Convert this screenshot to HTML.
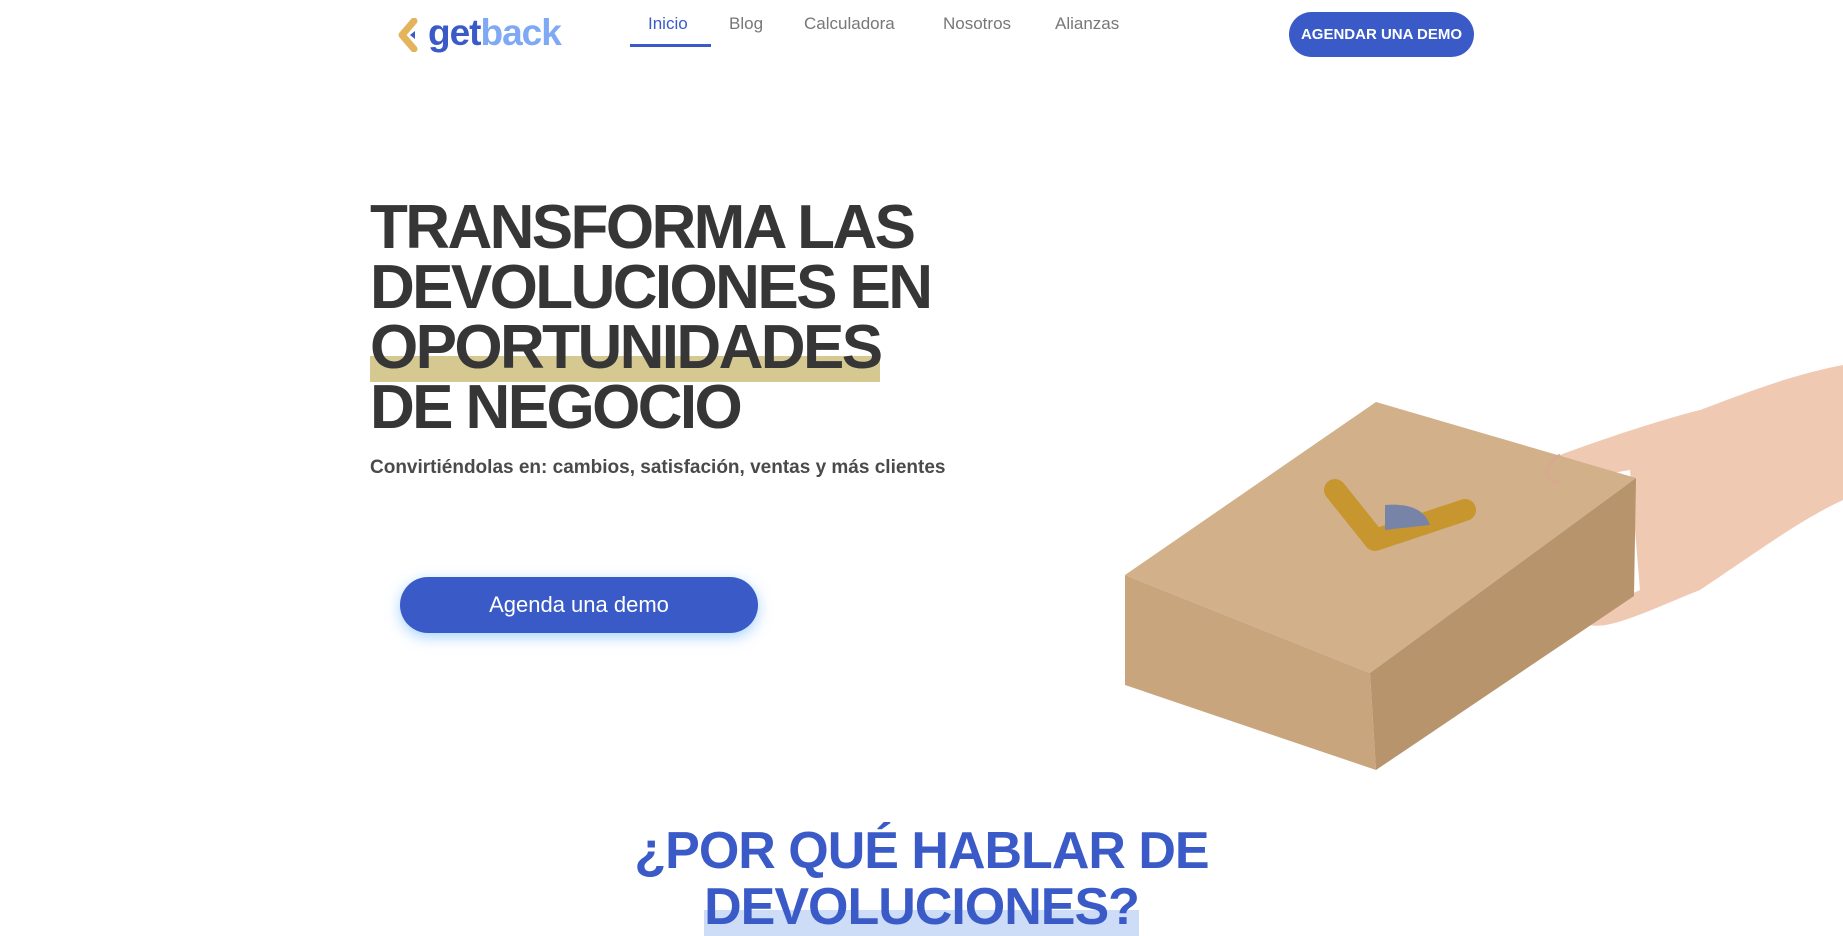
<!DOCTYPE html>
<html><head><meta charset="utf-8"><style>
*{margin:0;padding:0;box-sizing:border-box}
body{width:1843px;height:931px;overflow:hidden;background:#fff;font-family:"Liberation Sans",sans-serif;position:relative}
.a{position:absolute}
.nav{font-size:17px;color:#777;top:14px}
h1{position:absolute;left:370px;top:198px;font-size:62px;line-height:60px;color:#363636;letter-spacing:-2.6px;font-weight:700}
.hl{background:linear-gradient(transparent 62%,#d6c891 62%);}
</style></head><body>
<svg class="a" style="left:396px;top:18px" width="26" height="34" viewBox="0 0 26 34"><path d="M18 3 L6 17 L18 31" stroke="#e3b45c" stroke-width="7" fill="none" stroke-linecap="round" stroke-linejoin="round"/><path d="M19 13 L19 21 L14 17Z" fill="#3a5bc7"/></svg>
<div class="a" style="left:428px;top:12px;font-size:37px;font-weight:700;letter-spacing:-1px"><span style="color:#3a5bc7">get</span><span style="color:#7fa8f5">back</span></div>
<div class="a nav" style="left:648px;color:#3a5bc7">Inicio</div>
<div class="a" style="left:630px;top:44px;width:81px;height:3px;background:#3a5bc7"></div>
<div class="a nav" style="left:729px">Blog</div>
<div class="a nav" style="left:804px">Calculadora</div>
<div class="a nav" style="left:943px">Nosotros</div>
<div class="a nav" style="left:1055px">Alianzas</div>
<div class="a" style="left:1289px;top:12px;width:185px;height:45px;border-radius:23px;background:#3a5bc7;color:#fff;font-size:15px;font-weight:700;display:flex;align-items:center;justify-content:center">AGENDAR UNA DEMO</div>
<h1>TRANSFORMA LAS<br>DEVOLUCIONES EN<br><span class="hl">OPORTUNIDADES</span><br>DE NEGOCIO</h1>
<div class="a" style="left:370px;top:457px;font-size:19px;font-weight:700;color:#4a4a4a">Convirtiéndolas en: cambios, satisfación, ventas y más clientes</div>
<div class="a" style="left:400px;top:577px;width:358px;height:56px;border-radius:28px;background:#3a5bc7;color:#fff;font-size:22px;display:flex;align-items:center;justify-content:center;box-shadow:0 4px 14px rgba(80,170,255,.5)">Agenda una demo</div>
<svg class="a" style="left:1100px;top:360px" width="743" height="420" viewBox="1100 360 743 420">
<path d="M1843 365 C1790 375 1740 395 1700 410 C1660 420 1600 440 1560 455 C1540 465 1535 480 1560 482 L1630 470 L1640 590 C1620 600 1580 610 1590 625 C1610 630 1650 610 1700 590 C1760 550 1800 520 1843 500Z" fill="#f0c9b2"/>
<polygon points="1125,575 1376,402 1636,478 1370,673" fill="#d2b08a"/>
<polygon points="1125,575 1370,673 1376,770 1125,685" fill="#c9a57e"/>
<polygon points="1370,673 1636,478 1634,596 1376,770" fill="#b8946c"/>
<path d="M1335 490 L1375 540 L1465 510" stroke="#c8962f" stroke-width="22" fill="none" stroke-linecap="round" stroke-linejoin="round"/>
<path d="M1385 505 L1385 530 L1430 525 C1425 510 1410 503 1385 505Z" fill="#7784a8"/>
<path d="M1560 455 C1545 465 1540 480 1560 482" stroke="#d8a890" fill="none" stroke-width="3"/>
</svg>
<div class="a" style="left:0;width:1843px;top:823px;text-align:center;font-size:52px;font-weight:700;line-height:56px;color:#3a5bc7;letter-spacing:-1px">¿POR QUÉ HABLAR DE<br><span style="background:linear-gradient(transparent 55%,#cddcf7 55%)">DEVOLUCIONES?</span></div>
</body></html>
